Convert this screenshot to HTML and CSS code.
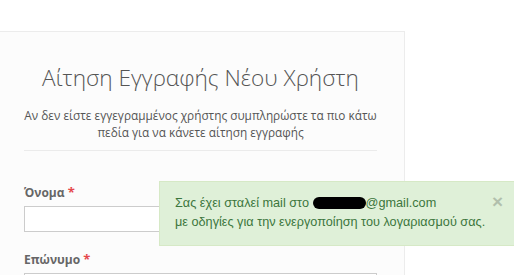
FILE: index.html
```html
<!DOCTYPE html>
<html lang="el">
<head>
    <meta charset="UTF-8">
    <meta name="viewport" content="width=device-width, initial-scale=1.0">
    <title>Αίτηση Εγγραφής</title>
    <link rel="stylesheet" href="styles.css">
</head>
<body>
    <div class="register-box">
        <h1>Αίτηση Εγγραφής Νέου Χρήστη</h1>
        <p class="intro">Αν δεν είστε εγγεγραμμένος χρήστης συμπληρώστε τα πιο κάτω<br>πεδία για να κάνετε αίτηση εγγραφής</p>

        <form class="register-form">
            <div class="field">
                <label for="firstname">Όνομα <span class="req">*</span></label>
                <input type="text" id="firstname" name="firstname">
            </div>
            <div class="field">
                <label for="lastname">Επώνυμο <span class="req">*</span></label>
                <input type="text" id="lastname" name="lastname">
            </div>
        </form>
    </div>

    <div class="alert-success">
        <span class="close">&times;</span>
        Σας έχει σταλεί mail στο <span class="hidden-mail"></span>@gmail.com<br>
        με οδηγίες για την ενεργοποίηση του λογαριασμού σας.
    </div>
</body>
</html>
```

FILE: styles.css
```css
* {
    margin: 0;
    padding: 0;
    box-sizing: border-box;
}

html, body {
    height: 275px;
    overflow: hidden;
}

body {
    font-family: "Open Sans", "Noto Sans", sans-serif;
    background-color: #fff;
    color: #555;
}

.register-box {
    width: 409px;
    height: 244px;
    margin: 31px 0 0 -4px;
    padding: 30px 27px 0 27px;
    background-color: #fcfcfc;
    border: 1px solid #ececec;
    border-bottom: none;
    overflow: hidden;
}

h1 {
    font-size: 22.6px;
    font-weight: 300;
    line-height: 32px;
    text-align: center;
    color: #555;
    white-space: nowrap;
}

.intro {
    margin-top: 13px;
    font-size: 11.8px;
    line-height: 17px;
    text-align: center;
    color: #555;
    white-space: nowrap;
    padding-bottom: 9px;
    border-bottom: 1px solid #ebebeb;
}

.register-form {
    padding-top: 32px;
}

.field {
    margin-bottom: 18px;
}

.field label {
    display: block;
    font-size: 12px;
    font-weight: 700;
    color: #666;
    line-height: 18px;
    margin-bottom: 4px;
}

.req {
    color: #e5484d;
    font-size: 13px;
}

.field input {
    display: block;
    width: 100%;
    height: 26px;
    border: 1px solid #ccc;
    background-color: #fff;
}

/* notification, floats over the form */
.alert-success {
    position: absolute;
    top: 181px;
    left: 159px;
    width: 355px;
    padding: 12px 15px 13px 15px;
    font-family: "Liberation Sans", Arial, sans-serif;
    font-size: 12.7px;
    line-height: 19px;
    color: #3c763d;
    background-color: #dff0d8;
    border: 1px solid #d6e9c6;
    border-right: none;
}

.hidden-mail {
    display: inline-block;
    width: 53px;
    height: 12px;
    background-color: #000;
    border-radius: 6px;
    vertical-align: -2px;
}

.close {
    position: absolute;
    top: 10px;
    left: 332px;
    font-size: 19px;
    font-weight: 700;
    line-height: 19px;
    color: #000;
    opacity: 0.2;
}
```
